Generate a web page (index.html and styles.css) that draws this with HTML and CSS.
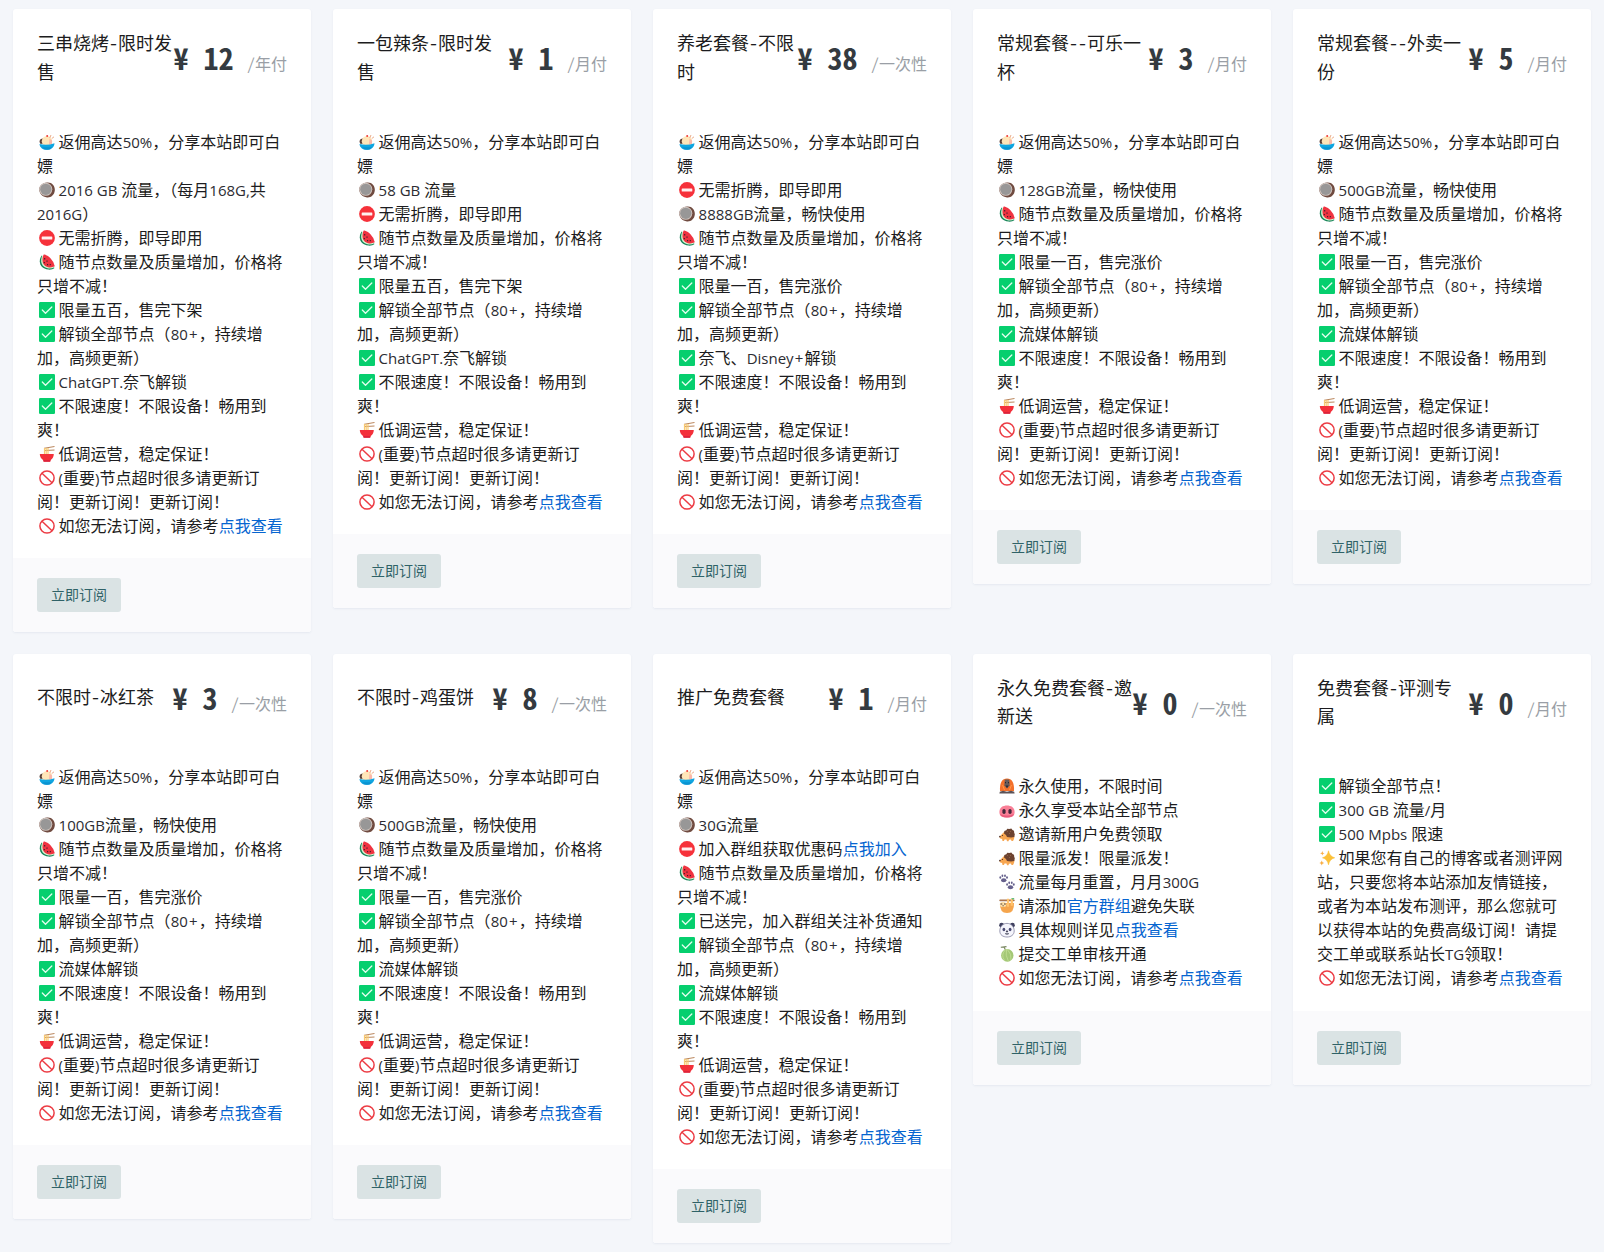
FILE: index.html
```html
<!DOCTYPE html>
<html lang="zh-CN">
<head>
<meta charset="utf-8">
<title>订阅套餐</title>
<link rel="stylesheet" href="styles.css">
</head>
<body>
<svg class="sprite" aria-hidden="true">
<symbol id="ice" viewBox="0 0 16 16"><path d="M1.200 9.800C-.4 6 1.500 4.300 4.500 4.500L6 10z" fill="#5b4038"/><circle cx="8" cy="7.200" r="5.200" fill="#ffe5b8"/><path d="M10.500 4.500l2.500 2v4h-3z" fill="#fbb8ab"/><path d="M10.800 3.800L12 1M12.800 4.500L15 2.800" stroke="#e8a07c" stroke-width=".9"/><circle cx="8.200" cy="1.900" r="1" fill="#f03a3a"/><path d="M.5 10q7.500 2 15-.8c-.3 4-3 6.600-7.500 6.600S.8 13.500.5 10z" fill="#0fa5e0"/><path d="M3 13.200h10q-2 2.600-5 2.600t-5-2.600z" fill="#0b92d0"/></symbol>
<symbol id="coco" viewBox="0 0 16 16"><path d="M8 .6C13 0 16.200 4 15.800 8.600c-.4 4.600-4 7.300-7.800 6.900C3 15 .1 11 .3 7.200.5 3.500 4 .8 8 .6z" fill="#704b40"/><circle cx="6.800" cy="7.300" r="6.500" fill="#d0c5bf"/><circle cx="6.800" cy="7.300" r="5.600" fill="#989797"/></symbol>
<symbol id="stop" viewBox="0 0 16 16"><circle cx="8" cy="8" r="7.900" fill="#f6313a"/><rect x="2.700" y="6.500" width="10.600" height="3" rx=".6" fill="#fff0f0"/></symbol>
<symbol id="melon" viewBox="0 0 16 16"><path d="M2.600 1.500C-1 7 .5 14.800 9.500 15.600c2.500.2 4.500-.6 6-1.600z" fill="#18855a"/><path d="M3.400 1.300C.8 7 2 13.500 9.500 14.500c2.200.2 4-.2 5.500-1z" fill="#d7f3cf"/><path d="M4.500.8C2.500 6 3 12.500 10 13.400c2 .2 4-.2 5.400-.8.500-.3.400-.8.100-1.100Q13 3 5.500.6q-.7-.3-1 .2z" fill="#ef3340"/><path d="M5.700 4v1.400M5.300 8v1.300M8 6.500v1.300M8.600 10v1.300M11.300 10v1.200" stroke="#3c2029" stroke-width="1.100"/></symbol>
<symbol id="ok" viewBox="0 0 16 16"><rect width="16" height="16" rx="1.300" fill="#06cf6e"/><path d="M3.300 8l3.200 3.200 6.300-6.200" fill="none" stroke="#e4ffef" stroke-width="1.300" stroke-linecap="round" stroke-linejoin="round"/></symbol>
<symbol id="bowl" viewBox="0 0 16 16"><path d="M5 2.300L15.500.5M5 4.600L15.500 4" stroke="#ba855b" stroke-width="1"/><path d="M5.500 2v7M7.200 2v7M9 2v7" stroke="#f8ca72" stroke-width="1.200"/><path d="M.8 8h14c0 2.600-1.200 4.600-2.800 5.800l-1 1.900H4.800l-1-1.900C2.200 12.600.8 10.600.8 8z" fill="#f3303a"/><path d="M4.500 14.200h6.800v1.400H4.500z" fill="#d6213d"/></symbol>
<symbol id="no" viewBox="0 0 16 16"><circle cx="8" cy="8" r="7.100" fill="#fff" stroke="#ec3b43" stroke-width="1.500"/><path d="M3 3.300l10 9.400" stroke="#ec3b43" stroke-width="1.500"/></symbol>
<symbol id="orang" viewBox="0 0 16 16"><path d="M1 13C.5 5 3 .5 8 .5S15.500 5 15 13z" fill="#f3702b"/><path d="M5.800 1.500h4.400l.5 6-2.700 3-2.700-3z" fill="#655b5b"/><path d="M6 4h1v1.300H6zm3 0h1v1.300H9zM6.500 7.500h3L8 10z" fill="#2a2630"/><path d="M.8 13.800l3.200-1 4 1 4-1 3.200 1 .4 1.700H.4z" fill="#5c5257"/><path d="M3.500 7l2 5M12.500 7l-2 5" stroke="#ff9748"/></symbol>
<symbol id="pig" viewBox="0 0 16 16"><path d="M.4 9.900C.4 5.400 4 3.400 8 3.400s7.600 2 7.600 6.500-3 5.500-7.600 5.500S.4 14.400.4 9.900z" fill="#f97f96"/><path d="M1 12q7 3 14 0-1 3.400-7 3.400T1 12z" fill="#e85a7b"/><rect x="3.400" y="6.900" width="3.200" height="5" rx="1.600" fill="#43283b"/><rect x="9.400" y="6.900" width="3.200" height="5" rx="1.600" fill="#43283b"/></symbol>
<symbol id="hog" viewBox="0 0 16 16"><path d="M.4 10.800L5 6l7 3 3.500 1.500-.5 2.500-1 2h-1.500l-.5-1.500-2 .3-.5 1.500H8l-.5-1.700H5.500L5 15H3.500l-.4-2q-2.300-.3-2.700-1.700z" fill="#f7a651"/><path d="M5 7.500l.3-2.500 2-.8 1-1.500 2 .2 2-.5 1.200 1.600 1.500.7.200 2 .6 1.500-.5 2.800-3.300.5-4-.5-1-2z" fill="#6c4230"/><path d="M8 6l1-1m1 3l1-1m0-1l1-1" stroke="#a37352" stroke-width=".6"/><circle cx="3.500" cy="9.500" r=".6" fill="#3b2628"/><circle cx=".9" cy="10.600" r=".8" fill="#3b2628"/></symbol>
<symbol id="paw" viewBox="0 0 16 16"><g id="pawprint" fill="#65608c"><ellipse cx="4.700" cy="6.200" rx="2.700" ry="2"/><ellipse cx="1.300" cy="3.500" rx=".9" ry="1.200"/><ellipse cx="3.400" cy="1.800" rx=".9" ry="1.300"/><ellipse cx="6" cy="1.800" rx=".9" ry="1.300"/><ellipse cx="8" cy="3.500" rx=".9" ry="1.200"/></g><use href="#pawprint" x="6.800" y="7"/></symbol>
<symbol id="sloth" viewBox="0 0 16 16"><path d="M1 5h14q.5 10-7 10T1 5z" fill="#f5a54d"/><rect x=".3" y="1.400" width="15.400" height="1.900" rx=".8" fill="#a9744f"/><path d="M9 .8v8M12.800 .8v7" stroke="#ffc36d" stroke-width="2.200"/><rect x=".8" y="4" width="6.500" height="5" rx="2.500" fill="#ffe1a8"/><path d="M1.500 6h1.800M5 6h1.800M3.500 7.800h1.200" stroke="#4a3834" stroke-width="1"/><path d="M12 .3L15.500 0l-1.500 2z" fill="#52b96e"/></symbol>
<symbol id="panda" viewBox="0 0 16 16"><circle cx="2.600" cy="3.200" r="2.400" fill="#3f405f"/><circle cx="13.400" cy="3.200" r="2.400" fill="#3f405f"/><path d="M8 1.400c4.500 0 7.200 3.500 7.200 7.500S12 15 8 15 .8 13 .8 8.900 3.500 1.400 8 1.400z" fill="#f5f5fc" stroke="#747494" stroke-width=".7"/><ellipse cx="4.900" cy="7.500" rx="1.400" ry="1.700" fill="#4b4b73"/><ellipse cx="11.100" cy="7.500" rx="1.400" ry="1.700" fill="#4b4b73"/><path d="M7 9h2l-1 1.300zM6 11.600q2 1.500 4 0" fill="#37384f" stroke="#37384f" stroke-width=".7"/></symbol>
<symbol id="hami" viewBox="0 0 16 16"><path d="M1.800 1.200L7.500.6M5 1l1.500 3" stroke="#75845c" stroke-width="1.100" fill="none"/><ellipse cx="8.300" cy="9.400" rx="6.200" ry="6.300" fill="#a4c876"/><path d="M6.500 3.500q-5 5.500-1 11M7.500 3.200q-1.500 6 2 12.300M8 3q5 5 4 11" fill="none" stroke="#c4de98" stroke-width=".8"/></symbol>
<symbol id="spark" viewBox="0 0 16 16"><path d="M9.500.8q1 5.700 6.200 7-5.200 1.300-6.200 7-1-5.700-6-7 5-1.300 6-7z" fill="#fcc138" stroke="#fcc138" stroke-width=".6"/><path d="M3.300 1l.6 1.700 1.600.6-1.600.6-.6 1.700-.6-1.700-1.600-.6 1.600-.6zM2.800 10.500l.7 1.700 1.700.8-1.700.7-.7 1.700-.8-1.700L.4 13l1.600-.8z" fill="#f9ad42"/></symbol>
</svg>
<main class="plans">

<section class="card">
<header><h3>三串烧烤-限时发<br>售</h3><p class="price"><b>¥ 12 </b><small>/年付</small></p></header>
<div class="desc">
<p><svg><use href="#ice"/></svg>返佣高达<i>50%</i>，分享本站即可白<br>嫖</p>
<p><svg><use href="#coco"/></svg><i>2016 GB </i>流量，（每月<i>168G,</i>共<br><i>2016G</i>）</p>
<p><svg><use href="#stop"/></svg>无需折腾，即导即用</p>
<p><svg><use href="#melon"/></svg>随节点数量及质量增加，价格将<br>只增不减！</p>
<p><svg><use href="#ok"/></svg>限量五百，售完下架</p>
<p><svg><use href="#ok"/></svg>解锁全部节点（<i>80</i><i class="plus">+</i>，持续增<br>加，高频更新）</p>
<p><svg><use href="#ok"/></svg><i>ChatGPT.</i>奈飞解锁</p>
<p><svg><use href="#ok"/></svg>不限速度！不限设备！畅用到<br>爽！</p>
<p><svg><use href="#bowl"/></svg>低调运营，稳定保证！</p>
<p><svg><use href="#no"/></svg><i>(</i>重要<i>)</i>节点超时很多请更新订<br>阅！更新订阅！更新订阅！</p>
<p><svg><use href="#no"/></svg>如您无法订阅，请参考<a>点我查看</a></p>
</div>
<footer><button>立即订阅</button></footer>
</section>

<section class="card">
<header><h3>一包辣条-限时发<br>售</h3><p class="price"><b>¥ 1 </b><small>/月付</small></p></header>
<div class="desc">
<p><svg><use href="#ice"/></svg>返佣高达<i>50%</i>，分享本站即可白<br>嫖</p>
<p><svg><use href="#coco"/></svg><i>58 GB </i>流量</p>
<p><svg><use href="#stop"/></svg>无需折腾，即导即用</p>
<p><svg><use href="#melon"/></svg>随节点数量及质量增加，价格将<br>只增不减！</p>
<p><svg><use href="#ok"/></svg>限量五百，售完下架</p>
<p><svg><use href="#ok"/></svg>解锁全部节点（<i>80</i><i class="plus">+</i>，持续增<br>加，高频更新）</p>
<p><svg><use href="#ok"/></svg><i>ChatGPT.</i>奈飞解锁</p>
<p><svg><use href="#ok"/></svg>不限速度！不限设备！畅用到<br>爽！</p>
<p><svg><use href="#bowl"/></svg>低调运营，稳定保证！</p>
<p><svg><use href="#no"/></svg><i>(</i>重要<i>)</i>节点超时很多请更新订<br>阅！更新订阅！更新订阅！</p>
<p><svg><use href="#no"/></svg>如您无法订阅，请参考<a>点我查看</a></p>
</div>
<footer><button>立即订阅</button></footer>
</section>

<section class="card">
<header><h3>养老套餐-不限<br>时</h3><p class="price"><b>¥ 38 </b><small>/一次性</small></p></header>
<div class="desc">
<p><svg><use href="#ice"/></svg>返佣高达<i>50%</i>，分享本站即可白<br>嫖</p>
<p><svg><use href="#stop"/></svg>无需折腾，即导即用</p>
<p><svg><use href="#coco"/></svg><i>8888GB</i>流量，畅快使用</p>
<p><svg><use href="#melon"/></svg>随节点数量及质量增加，价格将<br>只增不减！</p>
<p><svg><use href="#ok"/></svg>限量一百，售完涨价</p>
<p><svg><use href="#ok"/></svg>解锁全部节点（<i>80</i><i class="plus">+</i>，持续增<br>加，高频更新）</p>
<p><svg><use href="#ok"/></svg>奈飞、<i>Disney</i><i class="plus">+</i>解锁</p>
<p><svg><use href="#ok"/></svg>不限速度！不限设备！畅用到<br>爽！</p>
<p><svg><use href="#bowl"/></svg>低调运营，稳定保证！</p>
<p><svg><use href="#no"/></svg><i>(</i>重要<i>)</i>节点超时很多请更新订<br>阅！更新订阅！更新订阅！</p>
<p><svg><use href="#no"/></svg>如您无法订阅，请参考<a>点我查看</a></p>
</div>
<footer><button>立即订阅</button></footer>
</section>

<section class="card">
<header><h3>常规套餐--可乐一<br>杯</h3><p class="price"><b>¥ 3 </b><small>/月付</small></p></header>
<div class="desc">
<p><svg><use href="#ice"/></svg>返佣高达<i>50%</i>，分享本站即可白<br>嫖</p>
<p><svg><use href="#coco"/></svg><i>128GB</i>流量，畅快使用</p>
<p><svg><use href="#melon"/></svg>随节点数量及质量增加，价格将<br>只增不减！</p>
<p><svg><use href="#ok"/></svg>限量一百，售完涨价</p>
<p><svg><use href="#ok"/></svg>解锁全部节点（<i>80</i><i class="plus">+</i>，持续增<br>加，高频更新）</p>
<p><svg><use href="#ok"/></svg>流媒体解锁</p>
<p><svg><use href="#ok"/></svg>不限速度！不限设备！畅用到<br>爽！</p>
<p><svg><use href="#bowl"/></svg>低调运营，稳定保证！</p>
<p><svg><use href="#no"/></svg><i>(</i>重要<i>)</i>节点超时很多请更新订<br>阅！更新订阅！更新订阅！</p>
<p><svg><use href="#no"/></svg>如您无法订阅，请参考<a>点我查看</a></p>
</div>
<footer><button>立即订阅</button></footer>
</section>

<section class="card">
<header><h3>常规套餐--外卖一<br>份</h3><p class="price"><b>¥ 5 </b><small>/月付</small></p></header>
<div class="desc">
<p><svg><use href="#ice"/></svg>返佣高达<i>50%</i>，分享本站即可白<br>嫖</p>
<p><svg><use href="#coco"/></svg><i>500GB</i>流量，畅快使用</p>
<p><svg><use href="#melon"/></svg>随节点数量及质量增加，价格将<br>只增不减！</p>
<p><svg><use href="#ok"/></svg>限量一百，售完涨价</p>
<p><svg><use href="#ok"/></svg>解锁全部节点（<i>80</i><i class="plus">+</i>，持续增<br>加，高频更新）</p>
<p><svg><use href="#ok"/></svg>流媒体解锁</p>
<p><svg><use href="#ok"/></svg>不限速度！不限设备！畅用到<br>爽！</p>
<p><svg><use href="#bowl"/></svg>低调运营，稳定保证！</p>
<p><svg><use href="#no"/></svg><i>(</i>重要<i>)</i>节点超时很多请更新订<br>阅！更新订阅！更新订阅！</p>
<p><svg><use href="#no"/></svg>如您无法订阅，请参考<a>点我查看</a></p>
</div>
<footer><button>立即订阅</button></footer>
</section>

<section class="card">
<header><h3>不限时-冰红茶</h3><p class="price"><b>¥ 3 </b><small>/一次性</small></p></header>
<div class="desc">
<p><svg><use href="#ice"/></svg>返佣高达<i>50%</i>，分享本站即可白<br>嫖</p>
<p><svg><use href="#coco"/></svg><i>100GB</i>流量，畅快使用</p>
<p><svg><use href="#melon"/></svg>随节点数量及质量增加，价格将<br>只增不减！</p>
<p><svg><use href="#ok"/></svg>限量一百，售完涨价</p>
<p><svg><use href="#ok"/></svg>解锁全部节点（<i>80</i><i class="plus">+</i>，持续增<br>加，高频更新）</p>
<p><svg><use href="#ok"/></svg>流媒体解锁</p>
<p><svg><use href="#ok"/></svg>不限速度！不限设备！畅用到<br>爽！</p>
<p><svg><use href="#bowl"/></svg>低调运营，稳定保证！</p>
<p><svg><use href="#no"/></svg><i>(</i>重要<i>)</i>节点超时很多请更新订<br>阅！更新订阅！更新订阅！</p>
<p><svg><use href="#no"/></svg>如您无法订阅，请参考<a>点我查看</a></p>
</div>
<footer><button>立即订阅</button></footer>
</section>

<section class="card">
<header><h3>不限时-鸡蛋饼</h3><p class="price"><b>¥ 8 </b><small>/一次性</small></p></header>
<div class="desc">
<p><svg><use href="#ice"/></svg>返佣高达<i>50%</i>，分享本站即可白<br>嫖</p>
<p><svg><use href="#coco"/></svg><i>500GB</i>流量，畅快使用</p>
<p><svg><use href="#melon"/></svg>随节点数量及质量增加，价格将<br>只增不减！</p>
<p><svg><use href="#ok"/></svg>限量一百，售完涨价</p>
<p><svg><use href="#ok"/></svg>解锁全部节点（<i>80</i><i class="plus">+</i>，持续增<br>加，高频更新）</p>
<p><svg><use href="#ok"/></svg>流媒体解锁</p>
<p><svg><use href="#ok"/></svg>不限速度！不限设备！畅用到<br>爽！</p>
<p><svg><use href="#bowl"/></svg>低调运营，稳定保证！</p>
<p><svg><use href="#no"/></svg><i>(</i>重要<i>)</i>节点超时很多请更新订<br>阅！更新订阅！更新订阅！</p>
<p><svg><use href="#no"/></svg>如您无法订阅，请参考<a>点我查看</a></p>
</div>
<footer><button>立即订阅</button></footer>
</section>

<section class="card">
<header><h3>推广免费套餐</h3><p class="price"><b>¥ 1 </b><small>/月付</small></p></header>
<div class="desc">
<p><svg><use href="#ice"/></svg>返佣高达<i>50%</i>，分享本站即可白<br>嫖</p>
<p><svg><use href="#coco"/></svg><i>30G</i>流量</p>
<p><svg><use href="#stop"/></svg>加入群组获取优惠码<a>点我加入</a></p>
<p><svg><use href="#melon"/></svg>随节点数量及质量增加，价格将<br>只增不减！</p>
<p><svg><use href="#ok"/></svg>已送完，加入群组关注补货通知</p>
<p><svg><use href="#ok"/></svg>解锁全部节点（<i>80</i><i class="plus">+</i>，持续增<br>加，高频更新）</p>
<p><svg><use href="#ok"/></svg>流媒体解锁</p>
<p><svg><use href="#ok"/></svg>不限速度！不限设备！畅用到<br>爽！</p>
<p><svg><use href="#bowl"/></svg>低调运营，稳定保证！</p>
<p><svg><use href="#no"/></svg><i>(</i>重要<i>)</i>节点超时很多请更新订<br>阅！更新订阅！更新订阅！</p>
<p><svg><use href="#no"/></svg>如您无法订阅，请参考<a>点我查看</a></p>
</div>
<footer><button>立即订阅</button></footer>
</section>

<section class="card free">
<header><h3>永久免费套餐-邀<br>新送</h3><p class="price"><b>¥ 0 </b><small>/一次性</small></p></header>
<div class="desc">
<p><svg><use href="#orang"/></svg>永久使用，不限时间</p>
<p><svg><use href="#pig"/></svg>永久享受本站全部节点</p>
<p><svg><use href="#hog"/></svg>邀请新用户免费领取</p>
<p><svg><use href="#hog"/></svg>限量派发！限量派发！</p>
<p><svg><use href="#paw"/></svg>流量每月重置，月月<i>300G</i></p>
<p><svg><use href="#sloth"/></svg>请添加<a>官方群组</a>避免失联</p>
<p><svg><use href="#panda"/></svg>具体规则详见<a>点我查看</a></p>
<p><svg><use href="#hami"/></svg>提交工单审核开通</p>
<p><svg><use href="#no"/></svg>如您无法订阅，请参考<a>点我查看</a></p>
</div>
<footer><button>立即订阅</button></footer>
</section>

<section class="card free">
<header><h3>免费套餐-评测专<br>属</h3><p class="price"><b>¥ 0 </b><small>/月付</small></p></header>
<div class="desc">
<p><svg><use href="#ok"/></svg>解锁全部节点！</p>
<p><svg><use href="#ok"/></svg><i>300 GB </i>流量<i>/</i>月</p>
<p><svg><use href="#ok"/></svg><i>500 Mpbs </i>限速</p>
<p><svg><use href="#spark"/></svg>如果您有自己的博客或者测评网<br>站，只要您将本站添加友情链接，<br>或者为本站发布测评，那么您就可<br>以获得本站的免费高级订阅！请提<br>交工单或联系站长<i>TG</i>领取！</p>
<p><svg><use href="#no"/></svg>如您无法订阅，请参考<a>点我查看</a></p>
</div>
<footer><button>立即订阅</button></footer>
</section>

</main>
</body>
</html>
```
FILE: styles.css
```css
* { box-sizing: border-box; }
body {
  margin: 0;
  background: #f4f6fa;
  color: #1c1c20;
  font: 16px/24px "Noto Sans CJK SC", sans-serif;
}
h3, p { margin: 0; }
.sprite { display: none; }
.plans {
  display: grid;
  grid-template-columns: repeat(5, 298px);
  justify-content: center;
  align-items: start;
  gap: 22px;
  padding: 9px 0 8px;
}
.card {
  background: #fff;
  border-radius: 3px;
  overflow: hidden;
  box-shadow: 0 1px 2px rgba(210, 216, 228, .45);
  white-space: nowrap;
}
.card header {
  display: flex;
  justify-content: space-between;
  align-items: center;
  min-height: 87.600px;
  padding: 19px 24px 21px;
  font-family: "Noto Sans Mono CJK SC", "Noto Sans CJK SC", monospace;
}
.card h3 {
  font-size: 18px;
  font-weight: 400;
  line-height: 28.800px;
}
.price {
  display: flex;
  align-items: baseline;
  height: 47px;
  line-height: 48px;
  color: #343a40;
}
.price b {
  margin-right: -1.500px;
  font-size: 30px;
  font-weight: 700;
  white-space: pre;
}
.price small { font-size: 16px; color: #9a9fa6; }
.desc { padding: 22.400px 24px 21px; }
.free h3 { line-height: 28px; }
.free header { height: 97px; }
.free .desc { padding-top: 22px; padding-bottom: 22px; }
.desc svg {
  width: 16px;
  height: 16px;
  margin: 0 4px 0 2px;
  vertical-align: -2.500px;
}
.desc p { text-indent: -.4px; }
.desc i {
  color: #2c2c32;
  font: 15px/1 "Open Sans", sans-serif;
  white-space: pre;
}
.desc .plus { padding: 0 1.200px; }
.desc a { color: #0665d0; }
.card footer {
  padding: 20px 24px;
  background: #fafafc;
}
.card button {
  display: block;
  width: 84px;
  height: 34px;
  padding: 0;
  border: 0;
  border-radius: 3px;
  background: #dae3e4;
  color: #2f6267;
  font: 14px/33px "Noto Sans CJK SC", sans-serif;
}
```
